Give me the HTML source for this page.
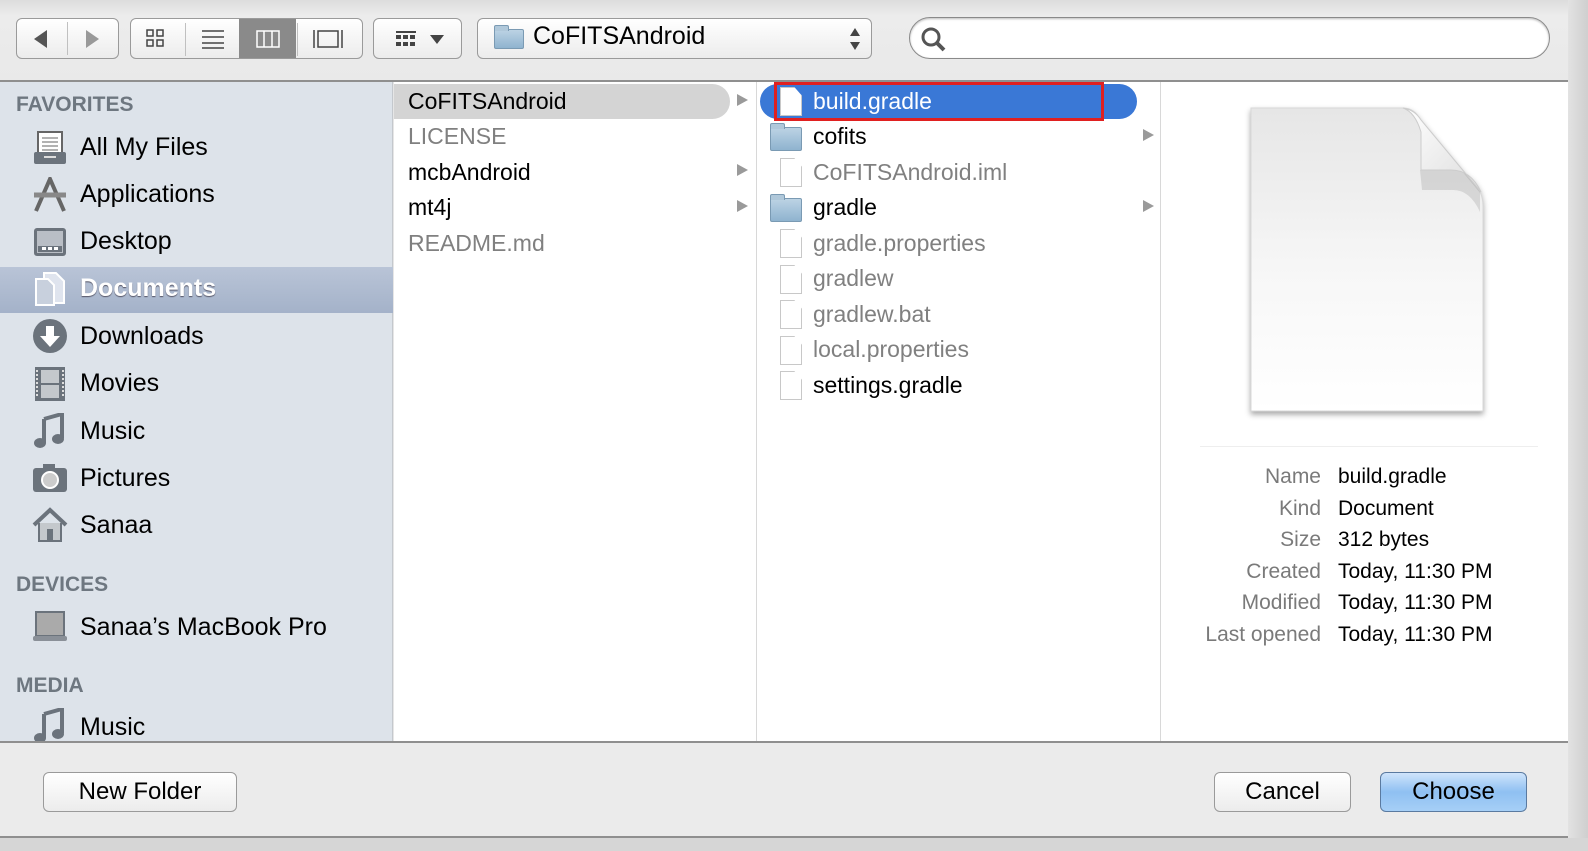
<!DOCTYPE html>
<html><head><meta charset="utf-8"><style>
*{margin:0;padding:0;box-sizing:border-box}
html,body{width:1588px;height:851px}
body{overflow:hidden;background:#e6e6e6;font-family:"Liberation Sans",sans-serif;position:relative}
.a{position:absolute}
.btn{position:absolute;background:linear-gradient(#fff,#ececec);border:1px solid #9a9a9a;border-radius:6px}
.sb{left:0;top:82px;width:393px;height:659px;background:#dde3ea;border-right:1px solid #c4c8cd}
.hd{position:absolute;left:16px;font-size:21px;font-weight:bold;color:#6e7780}
.it{position:absolute;left:80px;font-size:25px;color:#000}
.ic{position:absolute;left:32px;width:36px;height:36px}
.r{position:absolute;font-size:23px;white-space:nowrap}
.g{color:#808080}
.doc{position:absolute;width:22px;height:29px;background:#fff;border:1px solid #c8c8c8;clip-path:polygon(0 0,65% 0,100% 30%,100% 100%,0 100%)}
.fold{position:absolute;width:32px;height:24px;background:linear-gradient(#bcd3e4,#8fb3cf);border:1px solid #7a9ab3;border-radius:2px}
.fold:before{content:"";position:absolute;left:-1px;top:-5px;width:13px;height:5px;background:#b0c8da;border:1px solid #7a9ab3;border-bottom:none;border-radius:2px 2px 0 0}
.tri{position:absolute;width:0;height:0;border-top:6px solid transparent;border-bottom:6px solid transparent;border-left:11px solid #9a9a9a}
.lab{position:absolute;right:267px;font-size:21px;color:#7a7a7a;text-align:right}
.val{position:absolute;left:1338px;font-size:21px;color:#000}
</style></head><body>
<!-- toolbar -->
<div class="a" style="left:0;top:0;width:1588px;height:82px;background:linear-gradient(#dcdcdc,#ececec 20%,#e9e9e9);border-bottom:2px solid #8f8f8f"></div>
<div class="btn" style="left:16px;top:18px;width:103px;height:41px"></div>
<div class="a" style="left:67px;top:22px;width:1px;height:33px;background:#c0c0c0"></div>
<div class="a" style="left:34px;top:30px;border-top:9px solid transparent;border-bottom:9px solid transparent;border-right:13px solid #555"></div>
<div class="a" style="left:86px;top:30px;border-top:9px solid transparent;border-bottom:9px solid transparent;border-left:13px solid #999"></div>
<div class="btn" style="left:130px;top:18px;width:233px;height:41px;overflow:hidden">
 <div class="a" style="left:108px;top:0;width:57px;height:41px;background:#8a8a8a"></div>
 <div class="a" style="left:54px;top:4px;width:1px;height:33px;background:#c0c0c0"></div>
 <div class="a" style="left:166px;top:4px;width:1px;height:33px;background:#c0c0c0"></div>
</div>
<svg class="a" style="left:145px;top:27px" width="210" height="24"><g fill="none" stroke="#444" stroke-width="1.5">
<rect x="2" y="3" width="6" height="6"/><rect x="12" y="3" width="6" height="6"/><rect x="2" y="13" width="6" height="6"/><rect x="12" y="13" width="6" height="6"/>
<path d="M57 4h22M57 10h22M57 16h22M57 21h22"/>
<rect x="112" y="4" width="22" height="16" stroke="#fff"/><path d="M119 4v16M127 4v16" stroke="#fff"/>
<rect x="173" y="4" width="20" height="16"/><path d="M169 3v18M197 3v18"/></g></svg>
<div class="btn" style="left:373px;top:18px;width:89px;height:41px"></div>
<svg class="a" style="left:394px;top:28px" width="56" height="22"><g fill="#444"><rect x="2" y="3" width="20" height="2"/><rect x="2" y="7" width="5" height="4"/><rect x="9" y="7" width="5" height="4"/><rect x="16" y="7" width="5" height="4"/><rect x="2" y="14" width="5" height="4"/><rect x="9" y="14" width="5" height="4"/><rect x="16" y="14" width="5" height="4"/><path d="M36 7h14l-7 9z"/></g></svg>
<div class="btn" style="left:477px;top:18px;width:395px;height:41px"></div>
<div class="fold" style="left:494px;top:29px;width:30px;height:20px"></div>
<div class="r" style="left:533px;top:22px;font-size:25px">CoFITSAndroid</div>
<svg class="a" style="left:848px;top:26px" width="14" height="26"><path d="M7 2l5 8H2zM7 24l5-8H2z" fill="#444"/></svg>
<div class="a" style="left:909px;top:17px;width:641px;height:42px;background:#fff;border:1px solid #8a8a8a;border-radius:21px;box-shadow:inset 0 1px 2px #bbb"></div>
<svg class="a" style="left:920px;top:26px" width="28" height="28"><circle cx="11" cy="11" r="8" fill="none" stroke="#555" stroke-width="3"/><path d="M17 17l7 7" stroke="#555" stroke-width="4"/></svg>
<!-- sidebar -->
<div class="a sb"></div>
<div class="hd" style="top:93px">FAVORITES</div>
<div class="a" style="left:0;top:267px;width:393px;height:46px;background:linear-gradient(#b9c4d7,#a4b2c9)"></div>
<svg class="ic" style="top:130px"><rect x="6" y="2" width="24" height="24" fill="#fff" stroke="#666" stroke-width="2"/><path d="M10 8h16M10 12h16M10 16h16M10 20h16" stroke="#666"/><rect x="2" y="22" width="32" height="12" rx="2" fill="#6b737c"/><rect x="12" y="26" width="12" height="2" fill="#ddd"/></svg>
<div class="it" style="top:133px">All My Files</div>
<svg class="ic" style="top:177px"><path d="M4 34L18 2l14 32" fill="none" stroke="#666" stroke-width="4"/><path d="M2 18h32" stroke="#888" stroke-width="5"/></svg>
<div class="it" style="top:180px">Applications</div>
<svg class="ic" style="top:224px"><rect x="2" y="4" width="32" height="28" rx="3" fill="#6b737c"/><rect x="5" y="7" width="26" height="22" fill="#b9bec5"/><rect x="6" y="22" width="24" height="6" fill="#6b737c"/><rect x="10" y="23" width="4" height="3" fill="#fff"/><rect x="16" y="23" width="4" height="3" fill="#fff"/><rect x="22" y="23" width="4" height="3" fill="#fff"/></svg>
<div class="it" style="top:227px">Desktop</div>
<svg class="ic" style="top:271px"><path d="M12 2h12l8 8v22H12z" fill="#dfe4ee" stroke="#fff" stroke-width="2"/><path d="M4 8h12l6 6v20H4z" fill="#c8d0dd" stroke="#fff" stroke-width="2"/></svg>
<div class="it" style="top:274px;color:#fff;font-weight:bold;text-shadow:0 1px 1px #556">Documents</div>
<svg class="ic" style="top:318px"><circle cx="18" cy="18" r="17" fill="#6b737c"/><path d="M14 8h8v10h6l-10 11-10-11h6z" fill="#fff"/></svg>
<div class="it" style="top:322px">Downloads</div>
<svg class="ic" style="top:366px"><rect x="3" y="1" width="30" height="34" fill="#6b737c"/><rect x="9" y="4" width="18" height="13" fill="#c4c8cc"/><rect x="9" y="19" width="18" height="13" fill="#c4c8cc"/><path d="M5 4v28M31 4v28" stroke="#ddd" stroke-width="2" stroke-dasharray="2 2"/></svg>
<div class="it" style="top:369px">Movies</div>
<svg class="ic" style="top:413px"><path d="M12 6l18-5v24" fill="none" stroke="#6b737c" stroke-width="4"/><path d="M12 6v24" stroke="#6b737c" stroke-width="4"/><ellipse cx="8" cy="30" rx="6" ry="5" fill="#6b737c"/><ellipse cx="26" cy="26" rx="6" ry="5" fill="#6b737c"/></svg>
<div class="it" style="top:417px">Music</div>
<svg class="ic" style="top:460px"><rect x="1" y="8" width="34" height="24" rx="3" fill="#6b737c"/><rect x="11" y="4" width="12" height="6" fill="#6b737c"/><circle cx="18" cy="20" r="8" fill="#ccc" stroke="#fff" stroke-width="2"/></svg>
<div class="it" style="top:464px">Pictures</div>
<svg class="ic" style="top:507px"><path d="M2 18L18 3l16 15" fill="none" stroke="#6b737c" stroke-width="4"/><path d="M7 16v18h22V16" fill="#c4c8cc" stroke="#6b737c" stroke-width="2"/><rect x="15" y="22" width="6" height="12" fill="#6b737c"/></svg>
<div class="it" style="top:511px">Sanaa</div>
<div class="hd" style="top:573px">DEVICES</div>
<svg class="ic" style="top:610px"><rect x="4" y="2" width="28" height="24" fill="#aaa" stroke="#6b737c" stroke-width="2"/><rect x="1" y="26" width="34" height="5" rx="2" fill="#8a9098"/></svg>
<div class="it" style="top:613px">Sanaa’s MacBook Pro</div>
<div class="hd" style="top:674px">MEDIA</div>
<svg class="ic" style="top:708px"><path d="M12 6l18-5v24" fill="none" stroke="#6b737c" stroke-width="4"/><path d="M12 6v24" stroke="#6b737c" stroke-width="4"/><ellipse cx="8" cy="30" rx="6" ry="5" fill="#6b737c"/><ellipse cx="26" cy="26" rx="6" ry="5" fill="#6b737c"/></svg>
<div class="it" style="top:713px">Music</div>
<!-- columns -->
<div class="a" style="left:394px;top:82px;width:1174px;height:659px;background:#fff"></div>
<div class="a" style="left:756px;top:82px;width:1px;height:659px;background:#d8d8d8"></div>
<div class="a" style="left:1160px;top:82px;width:1px;height:659px;background:#d8d8d8"></div>
<div class="a" style="left:1568px;top:0;width:20px;height:851px;background:linear-gradient(90deg,#e2e2e2,#cfcfcf)"></div>
<div class="a" style="left:394px;top:84px;width:336px;height:35px;background:#d4d4d4;border-radius:0 18px 18px 0"></div>
<div class="r" style="left:408px;top:88px">CoFITSAndroid</div>
<div class="r g" style="left:408px;top:123px">LICENSE</div>
<div class="r" style="left:408px;top:159px">mcbAndroid</div>
<div class="r" style="left:408px;top:194px">mt4j</div>
<div class="r g" style="left:408px;top:230px">README.md</div>
<div class="tri" style="left:737px;top:94px"></div>
<div class="tri" style="left:737px;top:164px"></div>
<div class="tri" style="left:737px;top:200px"></div>
<div class="a" style="left:760px;top:84px;width:377px;height:35px;background:#3a78d6;border-radius:18px"></div>
<div class="a" style="left:774px;top:82px;width:330px;height:39px;border:3px solid #e02020"></div>
<div class="doc" style="left:780px;top:87px"></div>
<div class="r" style="left:813px;top:88px;color:#fff">build.gradle</div>
<div class="fold" style="left:770px;top:127px"></div><div class="r" style="left:813px;top:123px">cofits</div>
<div class="doc" style="left:780px;top:158px"></div><div class="r g" style="left:813px;top:159px">CoFITSAndroid.iml</div>
<div class="fold" style="left:770px;top:198px"></div><div class="r" style="left:813px;top:194px">gradle</div>
<div class="doc" style="left:780px;top:229px"></div><div class="r g" style="left:813px;top:230px">gradle.properties</div>
<div class="doc" style="left:780px;top:265px"></div><div class="r g" style="left:813px;top:265px">gradlew</div>
<div class="doc" style="left:780px;top:300px"></div><div class="r g" style="left:813px;top:301px">gradlew.bat</div>
<div class="doc" style="left:780px;top:336px"></div><div class="r g" style="left:813px;top:336px">local.properties</div>
<div class="doc" style="left:780px;top:371px"></div><div class="r" style="left:813px;top:372px">settings.gradle</div>
<div class="tri" style="left:1143px;top:129px"></div>
<div class="tri" style="left:1143px;top:200px"></div>
<!-- preview -->
<svg class="a" style="left:1244px;top:104px;filter:drop-shadow(0 3px 3px rgba(0,0,0,.35))" width="250" height="316">
<defs><linearGradient id="pg" x1="0" y1="0" x2="0" y2="1"><stop offset="0" stop-color="#e6e6e6"/><stop offset=".55" stop-color="#f7f7f7"/><stop offset="1" stop-color="#fff"/></linearGradient>
<linearGradient id="cg" x1="0" y1="0" x2="1" y2="1"><stop offset="0" stop-color="#fff"/><stop offset="1" stop-color="#ddd"/></linearGradient></defs>
<path d="M7 4h152q12 0 17 12l60 72q3 6 3 14v205H7z" fill="url(#pg)" stroke="#d8d8d8"/>
<path d="M176 66h33q17 0 27 22v20q-10-22-27-22h-31z" fill="rgba(0,0,0,.1)"/>
<path d="M159 4q12 4 18 24v38q0 0 30 0q20 0 30 22l-60-72q-6-10-18-12z" fill="url(#cg)" stroke="#ccc"/>
</svg>
<div class="a" style="left:1200px;top:446px;width:338px;height:1px;background:#eee"></div>
<div class="lab" style="top:465px">Name</div><div class="val" style="top:465px">build.gradle</div>
<div class="lab" style="top:497px">Kind</div><div class="val" style="top:497px">Document</div>
<div class="lab" style="top:528px">Size</div><div class="val" style="top:528px">312 bytes</div>
<div class="lab" style="top:560px">Created</div><div class="val" style="top:560px">Today, 11:30 PM</div>
<div class="lab" style="top:591px">Modified</div><div class="val" style="top:591px">Today, 11:30 PM</div>
<div class="lab" style="top:623px">Last opened</div><div class="val" style="top:623px">Today, 11:30 PM</div>
<!-- bottom -->
<div class="a" style="left:0;top:741px;width:1568px;height:97px;background:#ebebeb;border-top:2px solid #8f8f8f;border-bottom:2px solid #8f8f8f"></div>
<div class="a" style="left:0;top:838px;width:1588px;height:13px;background:#d6d6d6"></div>
<div class="btn" style="left:43px;top:772px;width:194px;height:40px"></div>
<div class="r" style="left:43px;top:778px;width:194px;text-align:center;font-size:24px">New Folder</div>
<div class="btn" style="left:1214px;top:772px;width:137px;height:40px"></div>
<div class="r" style="left:1214px;top:778px;width:137px;text-align:center;font-size:24px">Cancel</div>
<div class="btn" style="left:1380px;top:772px;width:147px;height:40px;background:linear-gradient(#cfe4fb,#8fc0f2 50%,#a6cff6);border-color:#5a7aa0"></div>
<div class="r" style="left:1380px;top:778px;width:147px;text-align:center;font-size:24px">Choose</div>
</body></html>
